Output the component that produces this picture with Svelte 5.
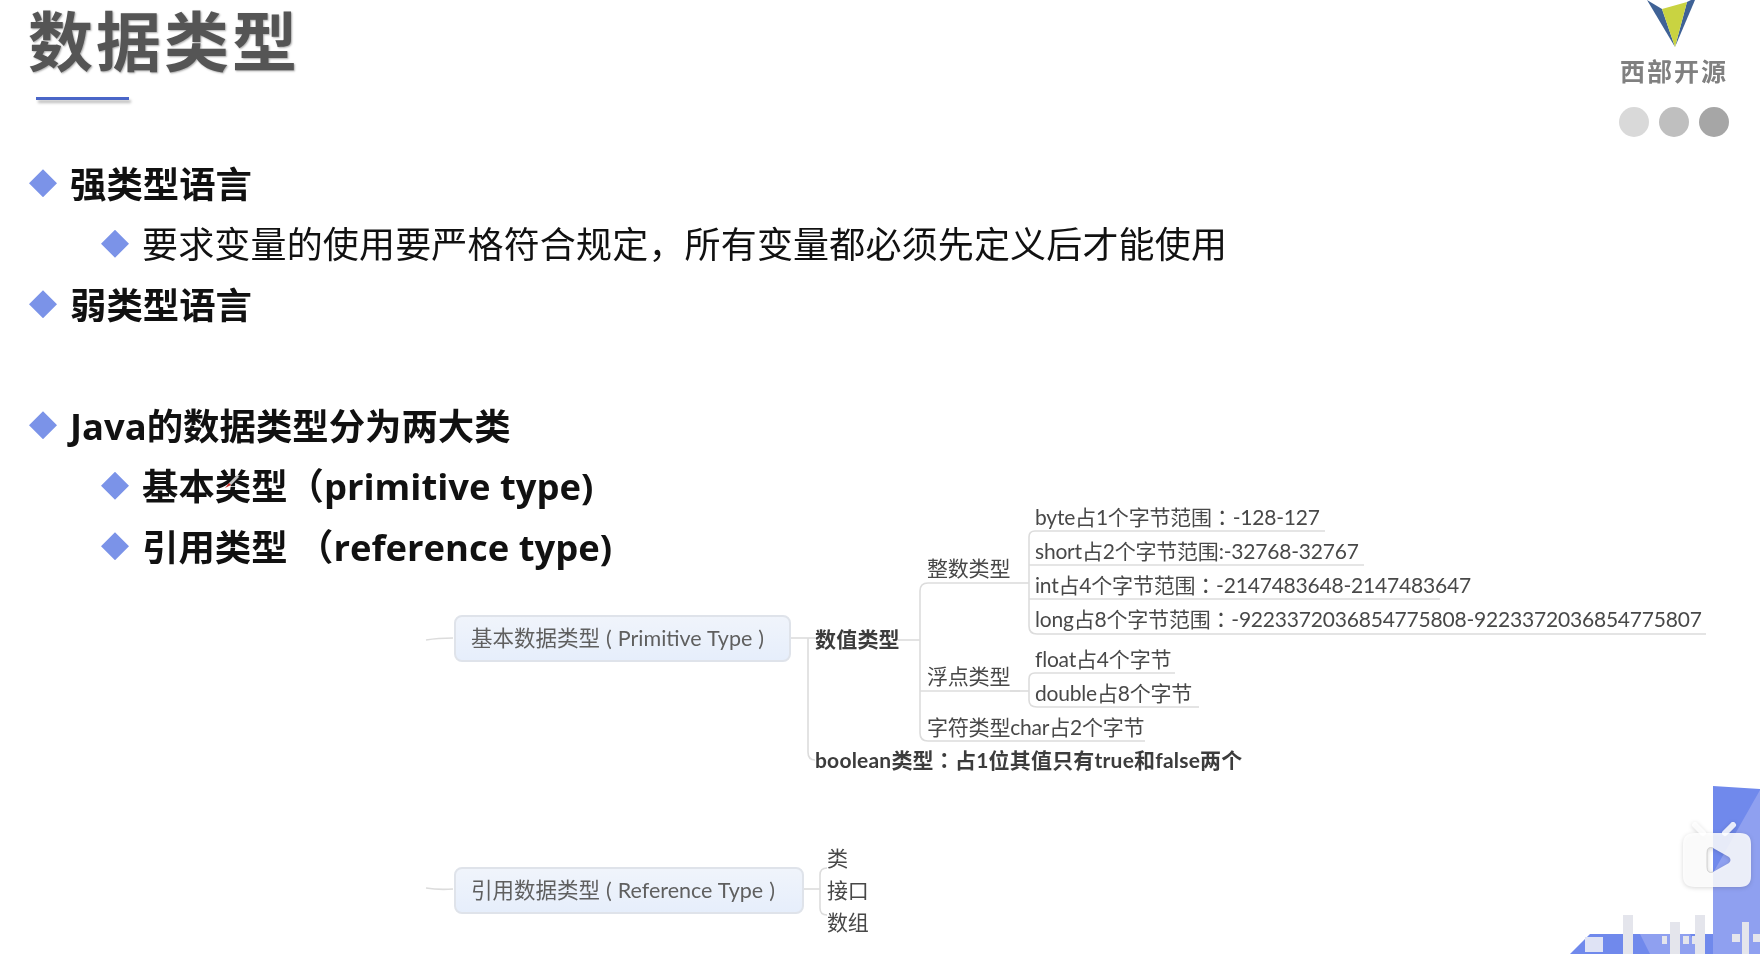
<script lang="ts">
  interface Node {
    text: string;
    x: number;
    y: number;
    bold?: boolean;
  }

  const lines = [
    { text: '强类型语言', level: 0 },
    { text: '要求变量的使用要严格符合规定，所有变量都必须先定义后才能使用', level: 1, plain: true },
    { text: '弱类型语言', level: 0 },
    { text: '', level: 0 },
    { text: 'Java的数据类型分为两大类', level: 0 },
    { text: '基本类型（primitive type)', level: 1 },
    { text: '引用类型 （reference type)', level: 1 }
  ];

  const nodes: Node[] = [
    { text: '数值类型', x: 815, y: 639, bold: true },
    { text: '整数类型', x: 927, y: 568 },
    { text: '浮点类型', x: 927, y: 676 },
    { text: '字符类型char占2个字节', x: 927, y: 727 },
    { text: 'byte占1个字节范围：-128-127', x: 1035, y: 517 },
    { text: 'short占2个字节范围:-32768-32767', x: 1035, y: 551 },
    { text: 'int占4个字节范围：-2147483648-2147483647', x: 1035, y: 585 },
    { text: 'long占8个字节范围：-9223372036854775808-9223372036854775807', x: 1035, y: 619 },
    { text: 'float占4个字节', x: 1035, y: 659 },
    { text: 'double占8个字节', x: 1035, y: 693 },
    { text: 'boolean类型：占1位其值只有true和false两个', x: 815, y: 760, bold: true },
    { text: '类', x: 827, y: 858 },
    { text: '接口', x: 827, y: 890 },
    { text: '数组', x: 827, y: 922 }
  ];

  const boxes = [
    { text: '基本数据类型 ( Primitive Type )', x: 454, y: 615, w: 337, h: 47 },
    { text: '引用数据类型 ( Reference Type )', x: 454, y: 867, w: 350, h: 47 }
  ];

  const links = [
    'M426 640 q12 -2 27 -2',
    'M791 638 H815',
    'M808 638 V752 q0 8 7 8',
    'M898 640 H920',
    'M928 583 q-8 0 -8 8 V733 q0 8 8 8 H1145',
    'M920 691 H1020',
    'M928 583 H1010',
    'M1010 583 H1029',
    'M1035 531 q-6 0 -6 6 V626 q0 8 8 8 H1706',
    'M1035 531 H1325',
    'M1029 565 H1364',
    'M1029 599 H1440',
    'M1010 691 H1029',
    'M1035 673 q-6 0 -6 6 V700 q0 7 8 7 H1199',
    'M1035 673 H1175',
    'M426 888 q12 2 27 1',
    'M804 889 H820',
    'M827 868 q-7 0 -7 7 V908 q0 7 7 7'
  ];

  const bars = [
    [1623, 915, 10, 39],
    [1670, 922, 10, 32],
    [1695, 915, 10, 39],
    [1742, 922, 7, 32],
    [1662, 936, 5, 8],
    [1683, 936, 6, 8],
    [1692, 936, 6, 8],
    [1732, 934, 8, 8],
    [1753, 934, 7, 8]
  ];
</script>

<div class="page">
  <header class="top">
    <div class="heading">
      <h1>数据类型</h1>
      <div class="rule"></div>
    </div>
    <div class="brand">
      <svg class="logo" width="56" height="48" viewBox="0 0 56 48">
        <polygon points="0,0 15,9 28,47" fill="#3f6296" />
        <polygon points="44,0 48,0 28,47 40,2" fill="#3f6296" />
        <polygon points="15,9 40,2 28,47" fill="#c9d341" />
      </svg>
      <div class="brand-name">西部开源</div>
      <div class="dots">
        <span class="dot d1"></span>
        <span class="dot d2"></span>
        <span class="dot d3"></span>
      </div>
    </div>
  </header>

  <ul class="outline">
    {#each lines as line}
      <li class:sub={line.level === 1} class:plain={line.plain}>
        {#if line.text}
          <i class="diamond"></i>
          <span>{line.text}</span>
        {/if}
      </li>
    {/each}
  </ul>

  <div class="mindmap">
    <svg class="wires" width="1760" height="954" viewBox="0 0 1760 954" fill="none">
      {#each links as d}
        <path {d} stroke="#dcdcdc" stroke-width="1.6" />
      {/each}
    </svg>
    {#each boxes as box}
      <div class="box" style="left:{box.x}px;top:{box.y}px;width:{box.w}px;height:{box.h}px">{box.text}</div>
    {/each}
    {#each nodes as node}
      <div class="node" class:bold={node.bold} style="left:{node.x}px;top:{node.y - 16}px">{node.text}</div>
    {/each}
  </div>

  <svg class="cursor" width="18" height="18" viewBox="0 0 18 18">
    <path d="M15 2 L7 10 L9 12 L17 4 Z" fill="#c9c9c9" />
    <path d="M7 10 L3 15 L9 12 Z" fill="#d0342c" />
  </svg>

  <svg class="corner" width="1760" height="954" viewBox="0 0 1760 954">
    <polygon points="1590,934 1713,934 1713,786 1760,789 1760,954 1570,954" fill="#7089ec" />
    <polygon points="1760,790 1713,873 1713,954 1760,954" fill="#8fa0f0" />
    <polygon points="1640,934 1690,934 1700,954 1650,954" fill="#8fa0f0" />
    {#each bars as b}
      <rect x={b[0]} y={b[1]} width={b[2]} height={b[3]} fill="#e4e5ec" />
    {/each}
    <rect x="1585" y="937" width="18" height="15" fill="#dfe3f5" />
    <g class="tv">
      <path d="M1703 833 l-8 -8" stroke="#fff" stroke-opacity=".85" stroke-width="6" stroke-linecap="round" />
      <path d="M1725 833 l8 -8" stroke="#fff" stroke-opacity=".85" stroke-width="6" stroke-linecap="round" />
      <path
        fill="#fff"
        fill-opacity=".85"
        fill-rule="evenodd"
        d="M1695 833 H1740 Q1751 833 1751 844 V876 Q1751 887 1740 887 H1695 Q1683 887 1683 876 V844 Q1683 833 1695 833 Z
           M1707 853 Q1707 846 1713 848 L1729 857 Q1732 860 1729 863 L1713 872 Q1707 874 1707 867 Z"
      />
      <path
        fill="none"
        stroke="#d0d0d0"
        stroke-width="1"
        d="M1713 848 Q1707 846 1707 853 V867 Q1707 874 1713 872"
      />
    </g>
  </svg>
</div>

<style>
  :global(body) {
    margin: 0;
    background: #fff;
  }

  .page {
    position: relative;
    width: 1760px;
    height: 954px;
    overflow: hidden;
    background: #fff;
    filter: blur(0.5px);
    font-family: Lato, "Noto Sans CJK SC", sans-serif;
  }

  .top {
    display: flex;
    justify-content: space-between;
    height: 152px;
    padding: 0 30px 0 28px;
    box-sizing: border-box;
  }

  h1 {
    margin: 10px 0 0;
    font-family: "Liberation Sans", "Noto Sans CJK SC", sans-serif;
    font-size: 65px;
    line-height: 68px;
    font-weight: 700;
    letter-spacing: 3px;
    color: #555;
    text-shadow: 1px 1px 2px #aaa;
  }

  .rule {
    width: 93px;
    height: 3px;
    margin: 19px 0 0 8px;
    background: #4a66c8;
    box-shadow: 2px 3px 3px #bbb;
  }

  .brand {
    display: flex;
    flex-direction: column;
    align-items: center;
    width: 112px;
  }

  .logo {
    display: block;
    margin-left: 2px;
  }

  .brand-name {
    margin-top: 7px;
    font-family: "Noto Sans CJK SC", sans-serif;
    font-size: 25px;
    line-height: 30px;
    font-weight: 700;
    letter-spacing: 2px;
    color: #808080;
  }

  .dots {
    display: flex;
    gap: 10px;
    margin-top: 22px;
  }

  .dot {
    width: 30px;
    height: 30px;
    border-radius: 50%;
  }

  .d1 { background: #d9d9d9; }
  .d2 { background: #bfbfbf; }
  .d3 { background: #a6a6a6; }

  .outline {
    list-style: none;
    margin: 0;
    padding: 0 0 0 29px;
    font-family: "Open Sans", "Noto Sans CJK SC", sans-serif;
  }

  .outline li {
    display: flex;
    align-items: center;
    gap: 13px;
    height: 60.5px;
    font-size: 36.4px;
    font-weight: 700;
    color: #111;
  }

  .outline li.sub {
    padding-left: 72px;
  }

  .outline li.plain {
    font-size: 36px;
    font-weight: 400;
    letter-spacing: 0.17px;
  }

  .diamond {
    flex: none;
    width: 28px;
    height: 28px;
    margin-top: 2px;
    background: #7b93e8;
    clip-path: polygon(50% 0, 100% 50%, 50% 100%, 0 50%);
  }

  .mindmap {
    position: absolute;
    inset: 0;
    font-family: Lato, "Noto Sans CJK TC", sans-serif;
  }

  .wires {
    position: absolute;
    left: 0;
    top: 0;
  }

  .box {
    position: absolute;
    display: flex;
    align-items: center;
    box-sizing: border-box;
    padding: 0 0 4px 15px;
    font-size: 21.5px;
    word-spacing: 0.5px;
    white-space: pre;
    color: #5f5f5f;
    background: linear-gradient(#f0f4fb, #e6eefb);
    border: 2px solid #dfe3ea;
    border-radius: 8px;
  }

  .node {
    position: absolute;
    font-size: 21px;
    line-height: 32px;
    letter-spacing: -0.2px;
    white-space: nowrap;
    color: #484848;
  }

  .node.bold {
    font-weight: 700;
    letter-spacing: 0.2px;
    color: #3c3c3c;
  }

  .cursor {
    position: absolute;
    left: 222px;
    top: 473px;
  }

  .corner {
    position: absolute;
    left: 0;
    top: 0;
  }

  .tv {
    filter: drop-shadow(0 1px 2px rgba(0, 0, 0, 0.18));
  }
</style>
